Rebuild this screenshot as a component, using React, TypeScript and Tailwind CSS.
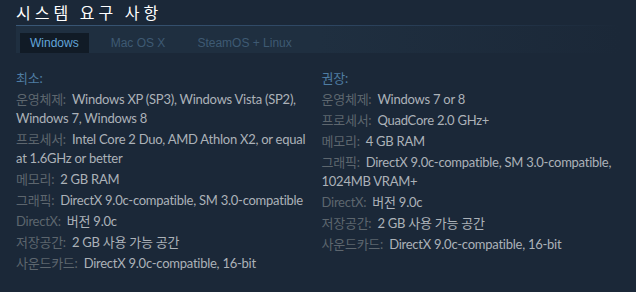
import React from "react";

type Item = { label: string; value: string };

const minItems: Item[] = [
  { label: "운영체제:", value: "Windows XP (SP3), Windows Vista (SP2), Windows 7, Windows 8" },
  { label: "프로세서:", value: "Intel Core 2 Duo, AMD Athlon X2, or equal at 1.6GHz or better" },
  { label: "메모리:", value: "2 GB RAM" },
  { label: "그래픽:", value: "DirectX 9.0c-compatible, SM 3.0-compatible" },
  { label: "DirectX:", value: "버전 9.0c" },
  { label: "저장공간:", value: "2 GB 사용 가능 공간" },
  { label: "사운드카드:", value: "DirectX 9.0c-compatible, 16-bit" },
];

const recItems: Item[] = [
  { label: "운영체제:", value: "Windows 7 or 8" },
  { label: "프로세서:", value: "QuadCore 2.0 GHz+" },
  { label: "메모리:", value: "4 GB RAM" },
  { label: "그래픽:", value: "DirectX 9.0c-compatible, SM 3.0-compatible, 1024MB VRAM+" },
  { label: "DirectX:", value: "버전 9.0c" },
  { label: "저장공간:", value: "2 GB 사용 가능 공간" },
  { label: "사운드카드:", value: "DirectX 9.0c-compatible, 16-bit" },
];

function Column({ title, items, className }: { title: string; items: Item[]; className: string }) {
  return (
    <div className={className}>
      <div className="text-[#4f7da3] leading-[19px] mb-[2px]">{title}</div>
      {items.map((it) => (
        <div key={it.label} className="leading-[19px] mb-[2px] text-[#acb2b8]">
          <span className="text-[#5d666e] pr-[3px]">{it.label}</span> {it.value}
        </div>
      ))}
    </div>
  );
}

export default function App() {
  return (
    <div className="w-[636px] h-[292px] bg-[#1b2838] px-4 overflow-hidden">
      <div className="h-[25px] leading-[24px] text-[16px] tracking-[4px] text-white font-['Noto_Sans_CJK_KR',sans-serif]">
        시스템 요구 사항
      </div>
      <div className="h-px bg-gradient-to-r from-[#3a5877] via-[#2e4763] to-transparent" />
      <div className="h-[27px] pt-[7px] pl-[4px] flex items-stretch gap-[12px] text-[12px] font-['Liberation_Sans',sans-serif] bg-gradient-to-r from-[#1f2f40] via-[#1f2f40] to-[#1b2838]">
        <div className="px-[10px] bg-[#111b26] text-[#62a6da] flex items-center">Windows</div>
        <div className="px-[10px] text-[#3e5a73] flex items-center">Mac OS X</div>
        <div className="px-[10px] text-[#3e5a73] flex items-center">SteamOS + Linux</div>
      </div>
      <div className="flex pt-[16px] text-[13px] tracking-[-0.25px] font-['Lato','Noto_Sans_CJK_KR',sans-serif]">
        <Column title="최소:" items={minItems} className="w-[296px]" />
        <Column title="권장:" items={recItems} className="w-[300px] ml-[11px]" />
      </div>
    </div>
  );
}
